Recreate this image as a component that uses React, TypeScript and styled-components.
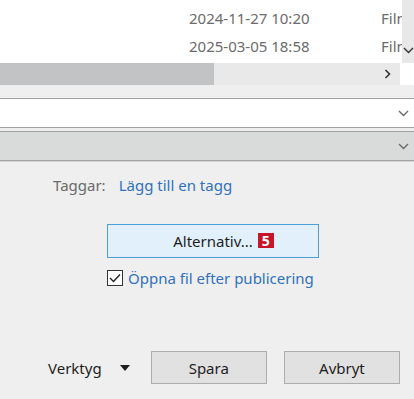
import React from 'react'
import styled, { createGlobalStyle } from 'styled-components'

const GlobalStyle = createGlobalStyle`
    html, body {
        margin: 0;
        padding: 0;
        background: #efefef;
        font-family: "Noto Sans", "Open Sans", sans-serif;
        overflow: hidden;
    }
`;

const Page = styled.div`
    width: 414px;
    height: 399px;
    display: flex;
    flex-direction: column;
    background: #efefef;
`;

const FileList = styled.div`
    height: 63px;
    display: flex;
    background: #ffffff;
`;

const Rows = styled.div`
    flex: 1;
    min-width: 0;
    overflow: hidden;
    display: flex;
    flex-direction: column;
    padding-top: 4px;
`;

const Row = styled.div`
    height: 28px;
    display: flex;
    align-items: center;
    padding-left: 189px;
    white-space: nowrap;
    color: #6b6b6b;
    font-size: 15px;
`;

const DateCell = styled.span`
    width: 192px;
    flex-shrink: 0;
`;

const VScroll = styled.div`
    width: 12px;
    flex-shrink: 0;
    background: #e8e8e8;
    display: flex;
    flex-direction: column;
    justify-content: flex-end;
    align-items: center;
    padding-bottom: 9px;
`;

const HScroll = styled.div`
    height: 22px;
    display: flex;
`;

const Track = styled.div`
    flex: 1;
    background: #e9e9e9;
    display: flex;
    align-items: center;
    justify-content: space-between;
    padding-right: 9px;
`;

const Thumb = styled.div`
    width: 214px;
    align-self: stretch;
    background: #c2c3c4;
`;

const Corner = styled.div`
    width: 14px;
    background: #ffffff;
`;

const Combo = styled.div<{ $grey?: boolean }>`
    height: 28px;
    border-top: 1px solid #a3a3a3;
    border-bottom: 1px solid #a3a3a3;
    background: ${p => p.$grey ? '#d9dada' : '#ffffff'};
    display: flex;
    align-items: center;
    justify-content: flex-end;
    padding-right: 5px;
    margin-top: ${p => p.$grey ? '3px' : '13px'};
`;

const Panel = styled.div`
    flex: 1;
    display: flex;
    flex-direction: column;
    border-top: 1px solid #d4d4d4;
`;

const TagRow = styled.div`
    display: flex;
    align-items: center;
    gap: 13px;
    padding-left: 53px;
    margin-top: 12px;
    font-size: 15px;
    line-height: 22px;
`;

const Label = styled.span`
    color: #6b6b6b;
`;

const Link = styled.span`
    color: #2f72bd;
`;

const OptionsBlock = styled.div`
    display: flex;
    flex-direction: column;
    padding-left: 107px;
    margin-top: 28px;
    gap: 10px;
`;

const OptionsButton = styled.div`
    width: 210px;
    height: 32px;
    border: 1px solid #4a9fdc;
    background: #e1f0fb;
    display: flex;
    align-items: center;
    justify-content: center;
    font-size: 15px;
    color: #1e1e1e;
`;

const ButtonText = styled.span`
    position: relative;
`;

const Badge = styled.span`
    position: absolute;
    left: calc(100% + 5px);
    top: 2px;
    width: 16px;
    height: 15px;
    background: #c4152a;
    color: #ffffff;
    font-weight: 700;
    font-size: 14px;
    line-height: 15px;
    text-align: center;
`;

const CheckRow = styled.div`
    display: flex;
    align-items: center;
    gap: 5px;
    font-size: 15px;
    color: #2f72bd;
`;

const Box = styled.div`
    width: 14px;
    height: 14px;
    border: 1px solid #333333;
    background: #ffffff;
    display: flex;
    align-items: center;
    justify-content: center;
`;

const Footer = styled.div`
    margin-top: auto;
    margin-bottom: 15px;
    display: flex;
    align-items: center;
    padding-left: 48px;
    padding-right: 14px;
    font-size: 15px;
    color: #1e1e1e;
`;

const Tools = styled.div`
    display: flex;
    align-items: center;
    gap: 18px;
    margin-right: 21px;
`;

const Button = styled.div`
    width: 115px;
    height: 31px;
    border: 1px solid #adadad;
    background: #e1e1e1;
    display: flex;
    align-items: center;
    justify-content: center;
    & + & {
        margin-left: 17px;
    }
`;

const ChevronDown = ({ color = '#6a6a6a' }: { color?: string }) => (
    <svg width="11" height="7" viewBox="0 0 11 7">
        <path d="M1 1 L5.5 5.5 L10 1" fill="none" stroke={color} strokeWidth="1.4" />
    </svg>
);

const ChevronRight = () => (
    <svg width="7" height="10" viewBox="0 0 7 10">
        <path d="M1.5 1 L5.5 5 L1.5 9" fill="none" stroke="#333" strokeWidth="1.6" />
    </svg>
);

const files = [
    { date: '2024-11-27 10:20', type: 'Filmklipp' },
    { date: '2025-03-05 18:58', type: 'Filmklipp' },
];

const App: React.FC = () => {
    return (
        <Page>
            <GlobalStyle />
            <FileList>
                <Rows>
                    {files.map((f) =>
                        <Row key={f.date}>
                            <DateCell>{f.date}</DateCell>
                            <span>{f.type}</span>
                        </Row>
                    )}
                </Rows>
                <VScroll>
                    <ChevronDown color="#333" />
                </VScroll>
            </FileList>
            <HScroll>
                <Track>
                    <Thumb />
                    <ChevronRight />
                </Track>
                <Corner />
            </HScroll>
            <Combo>
                <ChevronDown />
            </Combo>
            <Combo $grey>
                <ChevronDown />
            </Combo>
            <Panel>
                <TagRow>
                    <Label>Taggar:</Label>
                    <Link>Lägg till en tagg</Link>
                </TagRow>
                <OptionsBlock>
                    <OptionsButton>
                        <ButtonText>
                            Alternativ...
                            <Badge>5</Badge>
                        </ButtonText>
                    </OptionsButton>
                    <CheckRow>
                        <Box>
                            <svg width="12" height="10" viewBox="0 0 12 10">
                                <path d="M1 5 L4.5 8.5 L11 1.5" fill="none" stroke="#222" strokeWidth="1.4" />
                            </svg>
                        </Box>
                        Öppna fil efter publicering
                    </CheckRow>
                </OptionsBlock>
                <Footer>
                    <Tools>
                        <span>Verktyg</span>
                        <svg width="10" height="6" viewBox="0 0 10 6">
                            <path d="M0 0 H10 L5 6 Z" fill="#1e1e1e" />
                        </svg>
                    </Tools>
                    <Button>Spara</Button>
                    <Button>Avbryt</Button>
                </Footer>
            </Panel>
        </Page>
    )
}

export default App
